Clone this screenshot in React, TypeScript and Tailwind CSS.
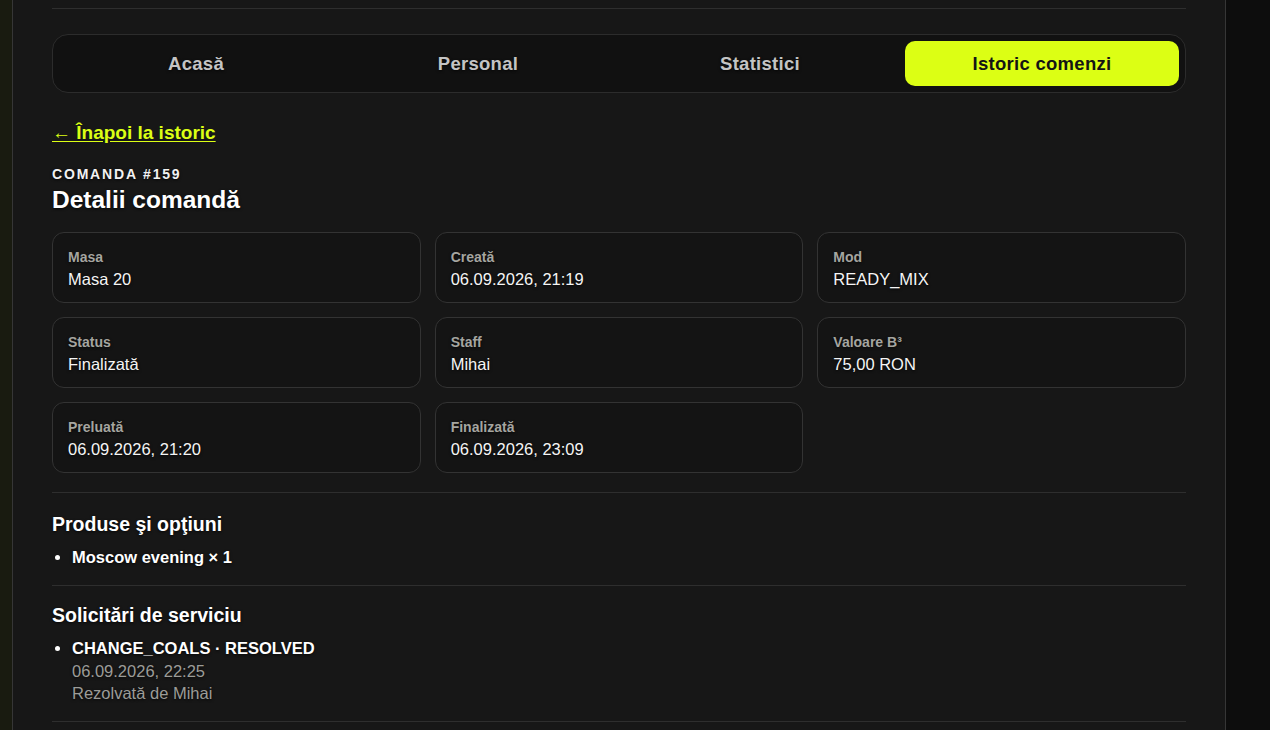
import React from 'react';
import clsx from 'clsx';

const tabs = ['Acasă', 'Personal', 'Statistici', 'Istoric comenzi'];

const fields = [
  { label: 'Masa', value: 'Masa 20' },
  { label: 'Creată', value: '06.09.2026, 21:19' },
  { label: 'Mod', value: 'READY_MIX' },
  { label: 'Status', value: 'Finalizată' },
  { label: 'Staff', value: 'Mihai' },
  { label: 'Valoare B³', value: '75,00 RON' },
  { label: 'Preluată', value: '06.09.2026, 21:20' },
  { label: 'Finalizată', value: '06.09.2026, 23:09' },
];

const shadow = '[text-shadow:0_1px_3px_rgba(0,0,0,0.75)]';

export default function App() {
  const active = 'Istoric comenzi';

  return (
    <div className="flex min-h-screen bg-[#0d0d0d] font-['Liberation_Sans',Arial,sans-serif] text-white">
      <div className="w-3 shrink-0 bg-[#191b10]" />

      <main className="w-[1214px] shrink-0 border-x border-[#363636] bg-[#171717] px-[39px] pt-2 pb-10">
        <div className="border-t border-[#2e2e2e]" />

        {/* tabs */}
        <nav className="mt-[25px] grid grid-cols-4 gap-2 rounded-2xl border border-[#2c2c2c] bg-[#111111] p-1.5">
          {tabs.map((tab) => (
            <button
              key={tab}
              className={clsx(
                'h-[45px] rounded-[10px] text-[18.5px] font-bold tracking-[0.015em]',
                tab === active
                  ? 'bg-[#dcff14] text-[#141414]'
                  : clsx('text-[#c4c4c4]', shadow)
              )}
            >
              {tab}
            </button>
          ))}
        </nav>

        <a
          href="#"
          className="mt-[28px] inline-block text-[19px] leading-6 font-bold text-[#dcff14] underline underline-offset-2"
        >
          ← Înapoi la istoric
        </a>

        <p className={clsx('mt-[19px] text-[14px] leading-[18px] font-bold uppercase tracking-[0.13em] text-[#f2f2f2]', shadow)}>
          Comanda #159
        </p>
        <h1 className={clsx('mt-[2px] text-[24.5px] leading-[30px] font-bold', shadow)}>Detalii comandă</h1>

        {/* order fields */}
        <div className="mt-[17px] grid grid-cols-3 gap-3.5">
          {fields.map((f) => (
            <div
              key={f.label}
              className="h-[71px] rounded-xl border border-[#333333] bg-[#141414] px-[15px] pt-[15px]"
            >
              <div className={clsx('text-[14px] leading-[18px] font-bold text-[#a5a5a0]', shadow)}>{f.label}</div>
              <div className={clsx('mt-px text-[16.5px] leading-6 text-[#f5f5f5]', shadow)}>{f.value}</div>
            </div>
          ))}
        </div>

        <div className="mt-[19px] border-t border-[#2e2e2e]" />

        <section className="pt-[18px] pb-[17px]">
          <h2 className={clsx('text-[19.5px] leading-[26px] font-bold', shadow)}>Produse şi opţiuni</h2>
          <ul className="mt-[9px] list-disc pl-5 text-[16.5px] leading-[22px]">
            <li className={clsx('font-bold', shadow)}>Moscow evening × 1</li>
          </ul>
        </section>

        <div className="border-t border-[#2e2e2e]" />

        <section className="pt-[16px] pb-[16px]">
          <h2 className={clsx('text-[19.5px] leading-[26px] font-bold', shadow)}>Solicitări de serviciu</h2>
          <ul className="mt-[9px] list-disc pl-5 text-[16.5px] leading-[22.5px]">
            <li className={shadow}>
              <div className="font-bold">CHANGE_COALS · RESOLVED</div>
              <div className="text-[#9c9c98]">06.09.2026, 22:25</div>
              <div className="text-[#9c9c98]">Rezolvată de Mihai</div>
            </li>
          </ul>
        </section>

        <div className="border-t border-[#2e2e2e]" />
      </main>

      <div className="flex-1 bg-[#0d0d0d]" />
    </div>
  );
}
